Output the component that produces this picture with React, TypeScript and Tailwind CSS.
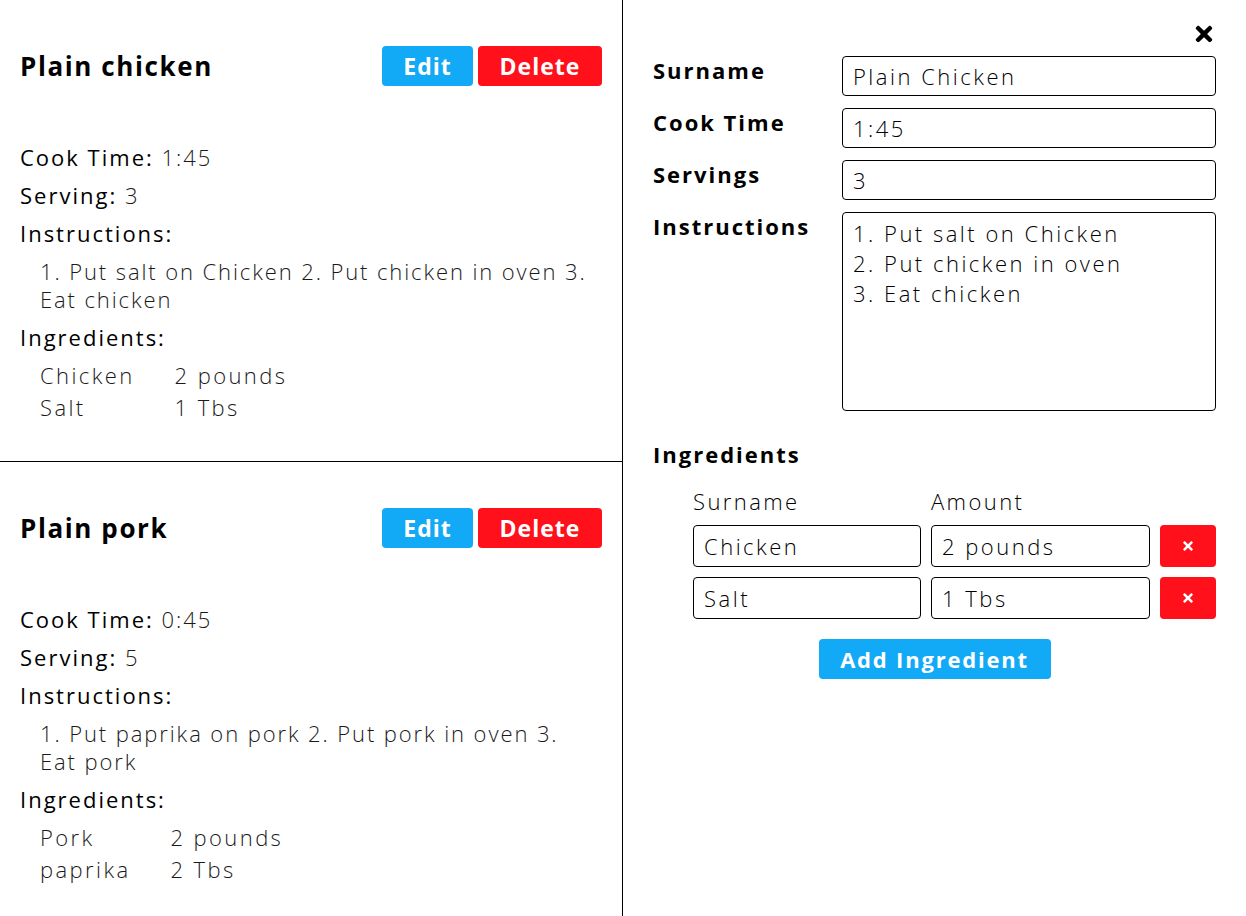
import { FaTimes } from "react-icons/fa";

type Ingredient = { name: string; amount: string };
type Recipe = {
  title: string;
  cookTime: string;
  servings: string;
  instructions: string;
  ingredients: Ingredient[];
};

const recipes: Recipe[] = [
  {
    title: "Plain chicken",
    cookTime: "1:45",
    servings: "3",
    instructions: "1. Put salt on Chicken 2. Put chicken in oven 3. Eat chicken",
    ingredients: [
      { name: "Chicken", amount: "2 pounds" },
      { name: "Salt", amount: "1 Tbs" },
    ],
  },
  {
    title: "Plain pork",
    cookTime: "0:45",
    servings: "5",
    instructions: "1. Put paprika on pork 2. Put pork in oven 3. Eat pork",
    ingredients: [
      { name: "Pork", amount: "2 pounds" },
      { name: "paprika", amount: "2 Tbs" },
    ],
  },
];

function RecipeCard({ recipe, last }: { recipe: Recipe; last?: boolean }) {
  return (
    <div className={`px-5 pt-[46px] ${last ? "" : "h-[462px] border-b border-black"}`}>
      <div className="flex h-10 items-center justify-between">
        <h2 className="text-[26px] font-bold tracking-[1.6px] text-black">{recipe.title}</h2>
        <div className="flex gap-[5px]">
          <button className="h-10 w-[91px] rounded-[4px] bg-[#12a9f6] text-[23px] font-bold tracking-[1px] text-white">
            Edit
          </button>
          <button className="h-10 w-[124px] rounded-[4px] bg-[#ff101a] text-[23px] font-bold tracking-[1px] text-white">
            Delete
          </button>
        </div>
      </div>

      <div className="mt-[57px] text-[22px] leading-[28px] tracking-[2px] text-black">
        <p>
          Cook Time: <span className="font-light text-[#1a1a1a]">{recipe.cookTime}</span>
        </p>
        <p className="mt-[10px]">
          Serving: <span className="font-light text-[#1a1a1a]">{recipe.servings}</span>
        </p>
        <p className="mt-[10px]">Instructions:</p>
        <p className="mt-[10px] pl-5 font-light tracking-[1.9px] text-[#1a1a1a]">{recipe.instructions}</p>
        <p className="mt-[10px]">Ingredients:</p>
        <table className="ml-5 mt-2 font-light tracking-[2.4px] text-[#1a1a1a]">
          <tbody>
            {recipe.ingredients.map((ing) => (
              <tr key={ing.name} className="h-8">
                <td className="pr-10">{ing.name}</td>
                <td>{ing.amount}</td>
              </tr>
            ))}
          </tbody>
        </table>
      </div>
    </div>
  );
}

function FieldRow({ label, children }: { label: string; children: React.ReactNode }) {
  return (
    <div className="flex items-start">
      <label className="w-[189px] text-[22px] font-bold leading-[28px] tracking-[2px] text-black">
        {label}
      </label>
      <div className="flex-1">{children}</div>
    </div>
  );
}

const inputCls =
  "w-full rounded-[4px] border border-black px-[10px] text-[22px] font-light tracking-[2.5px] text-black outline-none";

export default function App() {
  const current = recipes[0];

  return (
    <div className="flex h-[916px] w-full overflow-hidden bg-white font-['Open_Sans',sans-serif]">
      <div className="w-[623px] shrink-0 border-r border-black">
        {recipes.map((r, i) => (
          <RecipeCard key={r.title} recipe={r} last={i === recipes.length - 1} />
        ))}
      </div>

      <div className="flex-1 px-[30px] pt-[22px]">
        <div className="flex h-6 items-center justify-end">
          <FaTimes size={24} className="text-black" />
        </div>

        <div className="mt-[10px] flex flex-col gap-3">
          <FieldRow label="Surname">
            <input className={`${inputCls} h-10`} defaultValue="Plain Chicken" />
          </FieldRow>
          <FieldRow label="Cook Time">
            <input className={`${inputCls} h-10`} defaultValue={current.cookTime} />
          </FieldRow>
          <FieldRow label="Servings">
            <input className={`${inputCls} h-10`} defaultValue={current.servings} />
          </FieldRow>
          <FieldRow label="Instructions">
            <textarea
              className={`${inputCls} block h-[199px] resize-none py-[5px] leading-[30px]`}
              defaultValue={"1. Put salt on Chicken\n2. Put chicken in oven\n3. Eat chicken"}
            />
          </FieldRow>
        </div>

        <h3 className="mt-[29px] text-[22px] font-bold leading-[28px] tracking-[2px] text-black">
          Ingredients
        </h3>

        <div className="ml-10 mt-[19px]">
          <div className="flex gap-[10px] text-[22px] font-light leading-[28px] tracking-[2.4px] text-black">
            <span className="w-[228px]">Surname</span>
            <span>Amount</span>
          </div>
          <div className="mt-[10px] flex flex-col gap-[10px]">
            {current.ingredients.map((ing) => (
              <div key={ing.name} className="flex gap-[10px]">
                <input className={`${inputCls} h-[42px] !w-[228px]`} defaultValue={ing.name} />
                <input className={`${inputCls} h-[42px] !w-[219px]`} defaultValue={ing.amount} />
                <button className="flex h-[42px] w-[56px] items-center justify-center rounded-[4px] bg-[#ff101a] text-white">
                  <FaTimes size={14} />
                </button>
              </div>
            ))}
          </div>
        </div>

        <div className="mt-5 flex justify-center">
          <button className="h-10 w-[232px] rounded-[4px] bg-[#12a9f6] text-[22px] font-bold tracking-[1.8px] text-white">
            Add Ingredient
          </button>
        </div>
      </div>
    </div>
  );
}
